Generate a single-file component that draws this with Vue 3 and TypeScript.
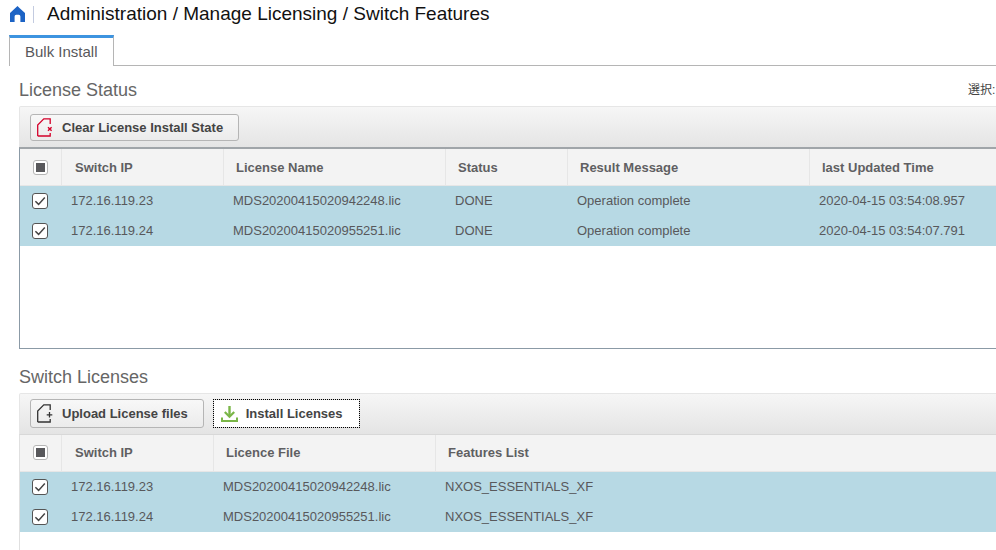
<template>
  <div class="page">
    <header class="crumb-bar">
      <svg class="home" viewBox="0 0 15 16" width="15" height="16">
        <path d="M7.5 0 L10 2.4 L15 7 V16 H10.4 V10.4 A1.6 1.6 0 0 0 8.8 8.8 H6.2 A1.6 1.6 0 0 0 4.6 10.4 V16 H0 V7 Z" fill="#1c63c5" />
      </svg>
      <span class="crumb-sep"></span>
      <h1 class="crumb-title">Administration / Manage Licensing / Switch Features</h1>
    </header>

    <div class="tabs">
      <div class="tab">Bulk Install</div>
    </div>

    <section class="section first">
      <div class="section-head">
        <h2>License Status</h2>
        <span class="select-hint">選択:</span>
      </div>
      <div class="toolbar">
        <button class="btn">
          <svg viewBox="0 0 16 19" width="16" height="19" fill="none">
            <path d="M.7 18 V7 L6.8 .8 H13.2 V6 M13.2 15 V18 H.7" stroke="#d4002a" stroke-width="1.3" />
            <path d="M11 9.2 L14.6 12.8 M14.6 9.2 L11 12.8" stroke="#d4002a" stroke-width="1.4" />
          </svg>
          Clear License Install State
        </button>
      </div>
      <div class="grid grid-status">
        <div class="row head" :style="{ gridTemplateColumns: statusCols }">
          <div class="cell check"><span class="box partial"><i></i></span></div>
          <div v-for="c in statusHeads" :key="c" class="cell">{{ c }}</div>
        </div>
        <div v-for="r in statusRows" :key="r.ip" class="row sel" :style="{ gridTemplateColumns: statusCols }">
          <div class="cell check"><span class="box checked"><svg viewBox="0 0 16 16" width="16" height="16" fill="none"><path d="M3.4 8.2 L6.6 11.4 L12.8 4.6" stroke="#444" stroke-width="1.5" /></svg></span></div>
          <div class="cell">{{ r.ip }}</div>
          <div class="cell">{{ r.file }}</div>
          <div class="cell">DONE</div>
          <div class="cell">Operation complete</div>
          <div class="cell">{{ r.time }}</div>
        </div>
      </div>
    </section>

    <section class="section second">
      <div class="section-head">
        <h2>Switch Licenses</h2>
      </div>
      <div class="toolbar toolbar-two">
        <button class="btn btn-upload">
          <svg viewBox="0 0 16 19" width="16" height="19" fill="none">
            <path d="M.7 18 V7 L6.8 .8 H13.2 V6 M13.2 15 V18 H.7" stroke="#333" stroke-width="1.3" />
            <path d="M12.5 8 V13.5 M9.7 10.8 H15.3" stroke="#333" stroke-width="1.3" />
          </svg>
          Upload License files
        </button>
        <button class="btn btn-focus">
          <svg viewBox="0 0 17 16" width="17" height="16" fill="none">
            <path d="M8.5 0 V10" stroke="#7ab648" stroke-width="2.4" />
            <path d="M3.8 6 L8.5 10.8 L13.2 6" stroke="#7ab648" stroke-width="2.2" />
            <path d="M1 11.5 V15 H16 V11.5" stroke="#7ab648" stroke-width="2" />
          </svg>
          Install Licenses
        </button>
      </div>
      <div class="grid grid-licenses">
        <div class="row head" :style="{ gridTemplateColumns: licenseCols }">
          <div class="cell check"><span class="box partial"><i></i></span></div>
          <div v-for="c in licenseHeads" :key="c" class="cell">{{ c }}</div>
        </div>
        <div v-for="r in statusRows" :key="r.ip" class="row sel" :style="{ gridTemplateColumns: licenseCols }">
          <div class="cell check"><span class="box checked"><svg viewBox="0 0 16 16" width="16" height="16" fill="none"><path d="M3.4 8.2 L6.6 11.4 L12.8 4.6" stroke="#444" stroke-width="1.5" /></svg></span></div>
          <div class="cell">{{ r.ip }}</div>
          <div class="cell">{{ r.file }}</div>
          <div class="cell">NXOS_ESSENTIALS_XF</div>
        </div>
      </div>
    </section>
  </div>
</template>

<script setup lang="ts">
const statusCols = '41px 162px 222px 122px 242px 1fr'
const licenseCols = '41px 152px 222px 1fr'

const statusHeads = ['Switch IP', 'License Name', 'Status', 'Result Message', 'last Updated Time']
const licenseHeads = ['Switch IP', 'Licence File', 'Features List']

const statusRows = [
  { ip: '172.16.119.23', file: 'MDS20200415020942248.lic', time: '2020-04-15 03:54:08.957' },
  { ip: '172.16.119.24', file: 'MDS20200415020955251.lic', time: '2020-04-15 03:54:07.791' }
]
</script>

<style>
html, body { margin: 0; overflow: hidden; background: #fff; }
</style>

<style scoped>
.page {
  width: 996px;
  height: 550px;
  overflow: hidden;
  font-family: "Liberation Sans", Arial, "Noto Sans CJK JP", sans-serif;
  color: #58585b;
}

.crumb-bar {
  display: flex;
  align-items: center;
  height: 28px;
  padding-left: 10px;
}
.home { flex: none; }
.crumb-sep {
  width: 1px;
  height: 17px;
  margin: 0 13px 0 8px;
  background: #c3cbe0;
}
.crumb-title {
  margin: 0;
  font-size: 19px;
  font-weight: 400;
  color: #111;
  white-space: nowrap;
}

.tabs {
  margin-top: 7px;
  margin-left: 9px;
  height: 30px;
  border-bottom: 1px solid #b5b5b5;
  display: flex;
}
.tab {
  width: 105px;
  height: 31px;
  box-sizing: border-box;
  border-top: 3px solid #3d94e0;
  border-left: 1px solid #b5b5b5;
  border-right: 1px solid #b5b5b5;
  background: #fff;
  font-size: 15px;
  line-height: 28px;
  padding-left: 15px;
  color: #58585b;
}

.section { padding-left: 19px; }
.section-head {
  display: flex;
  justify-content: space-between;
  align-items: flex-end;
  box-sizing: border-box;
  height: 40px;
  padding-bottom: 5px;
}
.second .section-head { height: 44px; }
.section-head h2 {
  margin: 0;
  font-size: 18px;
  line-height: 21px;
  font-weight: 400;
  color: #666;
}
.select-hint {
  font-size: 12px;
  line-height: 21px;
  color: #444;
  width: 28px;
  overflow: hidden;
  white-space: nowrap;
}

.toolbar {
  width: 1020px;
  height: 42px;
  box-sizing: border-box;
  display: flex;
  align-items: center;
  gap: 9px;
  padding-left: 10px;
  border: 1px solid #e6e6e6;
  border-bottom: 0;
  border-radius: 2px 2px 0 0;
  background: linear-gradient(#f6f6f6, #e4e4e4);
}
.toolbar-two {
  height: 41px;
  padding-bottom: 1px;
}

.btn {
  display: flex;
  align-items: center;
  gap: 9px;
  height: 27px;
  padding: 0 15px 0 6px;
  border: 1px solid #b5b5b5;
  border-radius: 3px;
  background: linear-gradient(#f8f8f8, #ebebeb);
  font-family: inherit;
  font-size: 13px;
  font-weight: 700;
  color: #444;
}
.btn-upload { height: 29px; }
.btn-focus {
  height: 29px;
  gap: 8px;
  background: #fff;
  border: 1px solid #d8d8d8;
  outline: 1px dotted #000;
  outline-offset: -1px;
  border-radius: 0;
  padding: 0 16px 0 7px;
}

.grid {
  width: 1020px;
  box-sizing: border-box;
  border-left: 1px solid #8b9aa6;
  font-size: 13px;
}
.grid-status {
  height: 202px;
  border-top: 2px solid #a0a5a9;
  border-bottom: 1px solid #8b9aa6;
  margin-top: -1px;
}
.grid-licenses {
  height: 120px;
  border-top: 1px solid #d8d8d8;
  border-left-color: #e0e0e0;
}

.row {
  display: grid;
  align-items: center;
  height: 30px;
}
.row.head {
  height: 37px;
  background: #f3f3f3;
  border-bottom: 1px solid #e6e6e6;
  box-sizing: border-box;
  font-weight: 700;
  color: #5f5f62;
}
.row.sel { background: #b7d9e4; }

.cell {
  padding-left: 10px;
  padding-bottom: 2px;
  white-space: nowrap;
}
.head .cell {
  height: 100%;
  box-sizing: border-box;
  display: flex;
  align-items: center;
  padding: 0 0 0 12px;
  border-left: 1px solid #e6e6e6;
}
.grid-licenses .head .cell { padding-bottom: 1px; }
.head .cell.check { border-left: 0; padding-left: 13px; }
.head .cell.check + .cell { padding-left: 13px; }
.row.sel .cell.check {
  padding: 0 0 0 12px;
  display: flex;
  align-items: center;
}

.box {
  width: 16px;
  height: 16px;
  box-sizing: border-box;
  display: flex;
  align-items: center;
  justify-content: center;
  border-radius: 3px;
  background: #fff;
}
.box.partial { width: 15px; height: 15px; border: 1px solid #b5b5b5; }
.box.partial i { width: 9px; height: 9px; background: #58585b; }
.box.checked { border: 1px solid #555; }
.box.checked svg { margin: -1px; flex: none; }
</style>
